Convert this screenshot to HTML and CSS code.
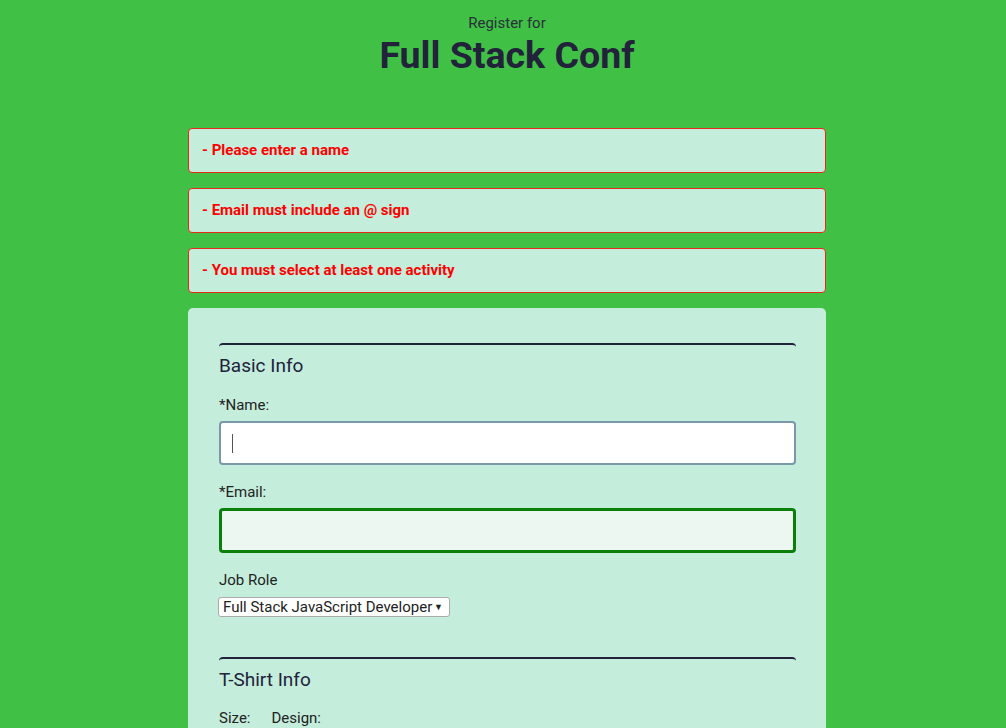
FILE: index.html
```html
<!DOCTYPE html>
<html lang="en">
<head>
<meta charset="utf-8">
<title>Full Stack Conf</title>
<link rel="stylesheet" href="styles.css">
</head>
<body>
<div class="page">
  <header class="header">
    <span class="subtitle">Register for</span>
    <h1 class="title">Full Stack Conf</h1>
  </header>
  <main class="container">
    <div class="error">- Please enter a name</div>
    <div class="error">- Email must include an @ sign</div>
    <div class="error">- You must select at least one activity</div>
    <form class="form">
      <section class="fieldset">
        <h2 class="legend">Basic Info</h2>
        <label class="label" for="name">*Name:</label>
        <div class="input-wrap">
          <input class="input" id="name" type="text">
          <span class="caret"></span>
        </div>
        <label class="label" for="mail">*Email:</label>
        <input class="input input-valid" id="mail" type="email">
        <label class="label" for="title">Job Role</label>
        <div class="select-wrap">
          <select class="select" id="title">
            <option>Full Stack JavaScript Developer</option>
          </select>
        </div>
      </section>
      <section class="fieldset">
        <h2 class="legend">T-Shirt Info</h2>
        <div class="shirt-row">
          <span class="label-inline">Size:</span>
          <span class="label-inline">Design:</span>
        </div>
      </section>
    </form>
  </main>
</div>
</body>
</html>
```

FILE: styles.css
```css
* { box-sizing: border-box; }
html, body { margin: 0; padding: 0; }
body {
  background: #40c146;
  font-family: Roboto, "Noto Sans", Arial, sans-serif;
  color: #22223b;
  height: 728px;
  overflow: hidden;
}
.page {
  padding-left: 8px;
}
.header {
  display: flex;
  flex-direction: column;
  align-items: center;
  padding-top: 14px;
}
.subtitle {
  font-size: 15px;
  line-height: 18px;
  color: #2a2f3a;
}
.title {
  margin: 0;
  font-size: 37.5px;
  line-height: 46px;
  font-weight: 700;
  color: #22223b;
}
.container {
  width: 638px;
  margin: 50px auto 0;
  display: flex;
  flex-direction: column;
  gap: 15px;
}
.error {
  height: 45px;
  background: #c4eddb;
  border: 1px solid #e8281c;
  border-radius: 4px;
  color: #ff0000;
  font-weight: 700;
  font-size: 15px;
  line-height: 18px;
  padding: 12px 0 0 13px;
}
.form {
  background: #c4eddb;
  border-radius: 5px;
  padding: 35px 30px 20px 31px;
  display: flex;
  flex-direction: column;
  gap: 40px;
}
.fieldset {
  border-top: 2px solid #22223b;
  border-radius: 4px;
  display: flex;
  flex-direction: column;
  align-items: flex-start;
}
.legend {
  margin: 9px 0 0 0;
  font-size: 19px;
  line-height: 24px;
  font-weight: 400;
  color: #22223b;
}
.label {
  margin-top: 18px;
  font-size: 15px;
  line-height: 18px;
  color: #222;
}
.input-wrap {
  position: relative;
  width: 100%;
  margin-top: 7px;
}
.input {
  display: block;
  width: 100%;
  height: 44px;
  border: 2px solid #7b98ab;
  border-radius: 4px;
  background: #fff;
  font: inherit;
  outline: none;
  margin: 0;
}
.input-valid {
  margin-top: 7px;
  border: 3px solid #0a800a;
  background: #edf7f2;
  height: 45px;
}
.caret {
  position: absolute;
  left: 13px;
  top: 13px;
  width: 1px;
  height: 19px;
  background: #555;
}
.select-wrap {
  position: relative;
  margin-top: 8px;
  margin-left: -1px;
}
.select {
  -webkit-appearance: none;
  appearance: none;
  height: 20px;
  width: 232px;
  border: 1px solid #aaa;
  border-radius: 3px;
  background: #fff;
  font-family: Roboto, Arial, sans-serif;
  font-size: 15px;
  line-height: 18px;
  color: #222;
  padding: 0 0 0 4px;
  margin: 0;
}
.select-wrap::after {
  content: "\25BC";
  position: absolute;
  right: 7px;
  top: 5px;
  font-size: 9px;
  line-height: 10px;
  color: #222;
  pointer-events: none;
}
.shirt-row {
  display: flex;
  gap: 21px;
  margin-top: 17px;
}
.label-inline {
  font-size: 15px;
  line-height: 18px;
  color: #222;
}
```
